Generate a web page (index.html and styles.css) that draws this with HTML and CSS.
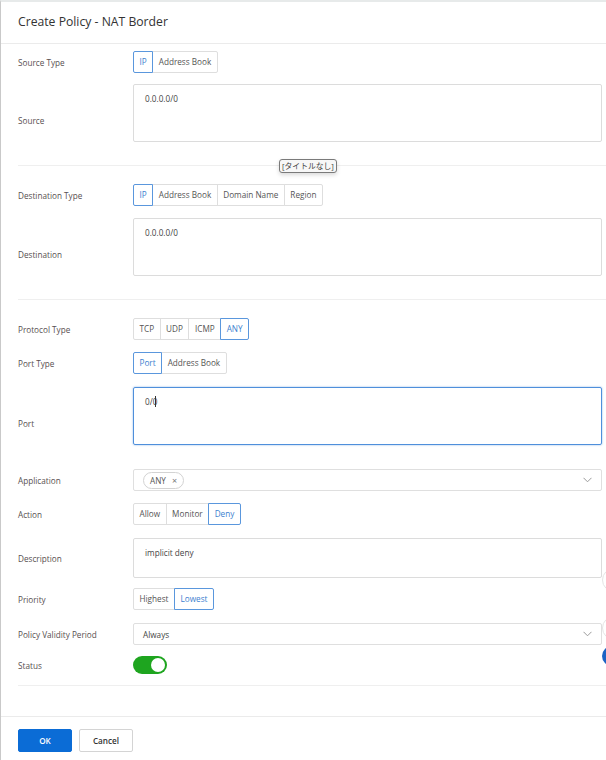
FILE: index.html
```html
<!DOCTYPE html>
<html>
<head>
<meta charset="utf-8">
<link rel="stylesheet" href="styles.css">
</head>
<body>
<div class="dialog">
  <div class="header"><h1 class="title">Create Policy - NAT Border</h1></div>
  <div class="form">
    <div class="section s1">
      <div class="row mb11">
        <div class="label">Source Type</div>
        <div class="seg"><span class="opt active">IP</span><span class="opt">Address Book</span></div>
      </div>
      <div class="row">
        <div class="label low">Source</div>
        <div class="area tall">0.0.0.0/0</div>
      </div>
    </div>
    <div class="section s2">
      <div class="row mb12">
        <div class="label">Destination Type</div>
        <div class="seg"><span class="opt active">IP</span><span class="opt">Address Book</span><span class="opt">Domain Name</span><span class="opt">Region</span></div>
      </div>
      <div class="row">
        <div class="label low">Destination</div>
        <div class="area tall">0.0.0.0/0</div>
      </div>
    </div>
    <div class="section s3">
      <div class="row mb12">
        <div class="label">Protocol Type</div>
        <div class="seg"><span class="opt">TCP</span><span class="opt">UDP</span><span class="opt">ICMP</span><span class="opt active">ANY</span></div>
      </div>
      <div class="row mb13">
        <div class="label">Port Type</div>
        <div class="seg"><span class="opt active">Port</span><span class="opt">Address Book</span></div>
      </div>
      <div class="row mb24">
        <div class="label low">Port</div>
        <div class="area tall focus">0/0<span class="caret"></span></div>
      </div>
      <div class="row mb12">
        <div class="label">Application</div>
        <div class="select">
          <span class="tag">ANY<span class="tag-x">×</span></span>
          <svg class="chev" width="9" height="6" viewBox="0 0 9 6"><path d="M0.5 0.8 L4.5 4.8 L8.5 0.8" fill="none" stroke="#9a9a9a" stroke-width="1"/></svg>
        </div>
      </div>
      <div class="row mb13">
        <div class="label">Action</div>
        <div class="seg"><span class="opt">Allow</span><span class="opt">Monitor</span><span class="opt active">Deny</span></div>
      </div>
      <div class="row mb10">
        <div class="label">Description</div>
        <div class="area short">implicit deny</div>
      </div>
      <div class="row mb13">
        <div class="label">Priority</div>
        <div class="seg"><span class="opt">Highest</span><span class="opt active">Lowest</span></div>
      </div>
      <div class="row mb10">
        <div class="label">Policy Validity Period</div>
        <div class="select">
          <span class="sel-text">Always</span>
          <svg class="chev" width="9" height="6" viewBox="0 0 9 6"><path d="M0.5 0.8 L4.5 4.8 L8.5 0.8" fill="none" stroke="#9a9a9a" stroke-width="1"/></svg>
        </div>
      </div>
      <div class="row status-row">
        <div class="label">Status</div>
        <div class="switch"><span class="knob"></span></div>
      </div>
    </div>
    <div class="spacer"></div>
  </div>
  <div class="footer">
    <button class="btn primary">OK</button>
    <button class="btn">Cancel</button>
  </div>
  <div class="tooltip">[タイトルなし]</div>
  <div class="edge-arc a1"></div>
  <div class="edge-arc a2"></div>
  <div class="edge-dot"></div>
</div>
</body>
</html>
```
FILE: styles.css
```css
* { box-sizing: border-box; }
html, body {
  margin: 0;
  padding: 0;
  width: 606px;
  height: 760px;
  overflow: hidden;
  background: #fff;
  font-family: "Open Sans", "Noto Sans CJK JP", sans-serif;
}
.dialog {
  position: relative;
  width: 606px;
  height: 760px;
  border-left: 1px solid #c9c9c9;
  border-top: 2px solid #e7eaea;
  display: flex;
  flex-direction: column;
}
.header {
  height: 42px;
  border-bottom: 1px solid #ebebeb;
  display: flex;
  align-items: center;
  padding-left: 17px;
}
.title {
  margin: 0;
  font-size: 12.2px;
  font-weight: 400;
  color: #333;
  padding-bottom: 2px;
}
.form {
  padding-left: 17px;
  display: flex;
  flex-direction: column;
}
.section {
  border-bottom: 1px solid #efefef;
  padding-right: 4px;
}
.s1 { padding-top: 7px; padding-bottom: 23px; }
.s2 { padding-top: 18px; padding-bottom: 23px; }
.s3 { padding-top: 18px; padding-bottom: 10px; }
.row {
  display: flex;
  align-items: center;
}
.mb10 { margin-bottom: 10px; }
.mb11 { margin-bottom: 11px; }
.mb12 { margin-bottom: 12px; }
.mb13 { margin-bottom: 13px; }
.mb24 { margin-bottom: 24px; }
.label {
  width: 115px;
  flex: none;
  font-size: 8.2px;
  color: #574f50;
}
.label.low { padding-top: 14px; }
.seg {
  display: inline-flex;
  height: 22px;
}
.opt {
  height: 22px;
  line-height: 20px;
  padding: 0 5.5px;
  border: 1px solid #dedede;
  margin-left: -1px;
  font-size: 8.2px;
  color: #555;
  background: #fff;
  position: relative;
}
.opt:first-child { margin-left: 0; border-radius: 2px 0 0 2px; }
.opt:last-child { border-radius: 0 2px 2px 0; }
.opt.active {
  border-color: #5a97dd;
  color: #3d7fcf;
  z-index: 1;
}
.area {
  flex: 1;
  border: 1px solid #dcdcdc;
  border-radius: 2px;
  padding: 8px 11px;
  font-size: 8.2px;
  color: #444;
  line-height: 12px;
}
.area.tall { height: 58px; }
.area.short { height: 40px; }
.area.focus {
  border-color: #4f8fdb;
  box-shadow: 0 0 2px rgba(79, 143, 219, 0.7);
}
.caret {
  display: inline-block;
  width: 1px;
  height: 11px;
  background: #333;
  margin-left: -2px;
  vertical-align: -2px;
}
.select {
  flex: 1;
  height: 22px;
  border: 1px solid #dfdfdf;
  border-radius: 2px;
  display: flex;
  align-items: center;
  padding: 0 9px;
}
.sel-text {
  font-size: 8.2px;
  color: #444;
}
.chev { margin-left: auto; margin-right: 0; }
.tag {
  height: 17px;
  border: 1px solid #d3d3d3;
  border-radius: 9px;
  padding: 0 6px;
  font-size: 8.2px;
  color: #555;
  display: inline-flex;
  align-items: center;
}
.tag-x {
  margin-left: 6px;
  color: #777;
  font-size: 9px;
}
.status-row { height: 20px; }
.switch {
  width: 34px;
  height: 18px;
  border-radius: 9px;
  background: #1ea51f;
  position: relative;
}
.knob {
  position: absolute;
  right: 2px;
  top: 2px;
  width: 14px;
  height: 14px;
  border-radius: 50%;
  background: #fff;
}
.spacer { height: 30px; }
.footer {
  border-top: 1px solid #ebebeb;
  padding: 12px 17px 0;
  display: flex;
  gap: 7px;
}
.btn {
  width: 54px;
  height: 23px;
  border: 1px solid #d4d4d4;
  border-radius: 2px;
  background: #fff;
  font-family: "Open Sans", sans-serif;
  font-size: 8.2px;
  font-weight: 600;
  color: #333;
  padding: 0;
}
.btn.primary {
  background: #0b6cd6;
  border-color: #0b6cd6;
  color: #fff;
}
.tooltip {
  position: absolute;
  left: 278px;
  top: 157px;
  height: 14px;
  padding: 0 2px;
  border: 1px solid #7a7a7a;
  border-radius: 3px;
  background: #f7f7f7;
  font-size: 7.8px;
  line-height: 12px;
  color: #444;
  box-shadow: 0 2px 4px rgba(0, 0, 0, 0.15);
}
.edge-arc {
  position: absolute;
  left: 601px;
  width: 24px;
  height: 24px;
  border-radius: 50%;
  border: 1px solid #e4e4e4;
}
.a1 { top: 566px; }
.a2 { top: 614px; }
.edge-dot {
  position: absolute;
  left: 601px;
  top: 644px;
  width: 20px;
  height: 20px;
  border-radius: 50%;
  background: #1c63c4;
}
```
